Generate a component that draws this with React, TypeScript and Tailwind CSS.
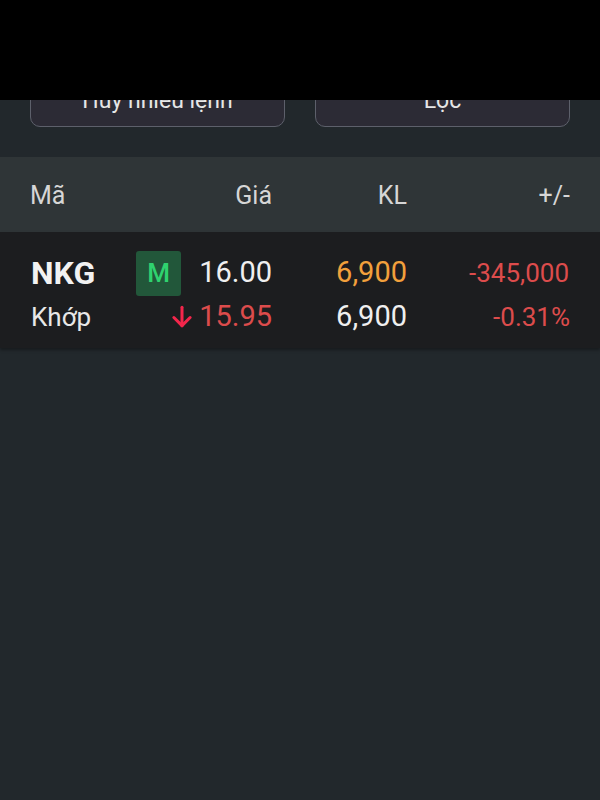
import React from "react";

export default function App() {
  return (
    <div
      className="w-[600px] h-[800px] bg-[#22282c] flex flex-col overflow-hidden"
      style={{ fontFamily: "Roboto, 'Noto Sans', sans-serif" }}
    >
      <div className="h-[100px] bg-black shrink-0" />
      <div className="h-[57px] overflow-hidden shrink-0 px-[30px]">
        <div className="-mt-[27px] flex gap-[30px]">
          <div className="flex-1 h-[54px] pt-[2px] rounded-[10px] border-[1.5px] border-[#5d606b] bg-[#2c2b35] flex items-center justify-center text-[23px] text-[#e6e6e6]">
            Hủy nhiều lệnh
          </div>
          <div className="flex-1 h-[54px] pt-[2px] rounded-[10px] border-[1.5px] border-[#5d606b] bg-[#2c2b35] flex items-center justify-center text-[23px] text-[#e6e6e6]">
            Lọc
          </div>
        </div>
      </div>
      <div className="h-[75px] pt-[3px] bg-[#2f3537] flex items-center px-[30px] text-[25px] text-[#d6d6d6] shrink-0">
        <div className="w-[242px] flex justify-between">
          <span>Mã</span>
          <span>Giá</span>
        </div>
        <div className="w-[135px] text-right">KL</div>
        <div className="flex-1 text-right">+/-</div>
      </div>
      <div className="bg-[#1c1d1f] px-[30px] pt-[18px] pb-[10px] shadow-[0_2px_3px_rgba(0,0,0,0.35)] relative shrink-0">
        <div className="flex items-center h-[46px]">
          <div className="w-[242px] flex items-center">
            <span className="text-[32px] font-bold text-[#f2f2f2] w-[106px] pl-[1px]">NKG</span>
            <span className="w-[45px] h-[45px] rounded-[3px] bg-[#22573a] text-[#2fd26f] text-[26px] font-medium flex items-center justify-center">
              M
            </span>
            <span className="flex-1 text-right text-[29px] text-[#efefef]">16.00</span>
          </div>
          <div className="w-[135px] text-right text-[29px] text-[#f2a03c]">6,900</div>
          <div className="flex-1 text-right text-[26px] text-[#dc4c4c] pr-[1px]">-345,000</div>
        </div>
        <div className="flex items-center h-[42px]">
          <div className="w-[242px] flex items-center">
            <span className="text-[26px] text-[#e8e8e8] pl-[1px]">Khớp</span>
            <span className="flex-1 flex items-center justify-end text-[29px] text-[#dc4c4c]">
              <svg
                width="26"
                height="26"
                viewBox="0 0 24 24"
                fill="none"
                stroke="#f3264b"
                strokeWidth="2.8"
                strokeLinecap="round"
                strokeLinejoin="round"
                className="mr-[4px]"
              >
                <path d="M12 3v17" />
                <path d="m19.5 12.5-7.5 7.5-7.5-7.5" />
              </svg>
              15.95
            </span>
          </div>
          <div className="w-[135px] text-right text-[29px] text-[#efefef]">6,900</div>
          <div className="flex-1 text-right text-[26px] text-[#dc4c4c]">-0.31%</div>
        </div>
      </div>
    </div>
  );
}
